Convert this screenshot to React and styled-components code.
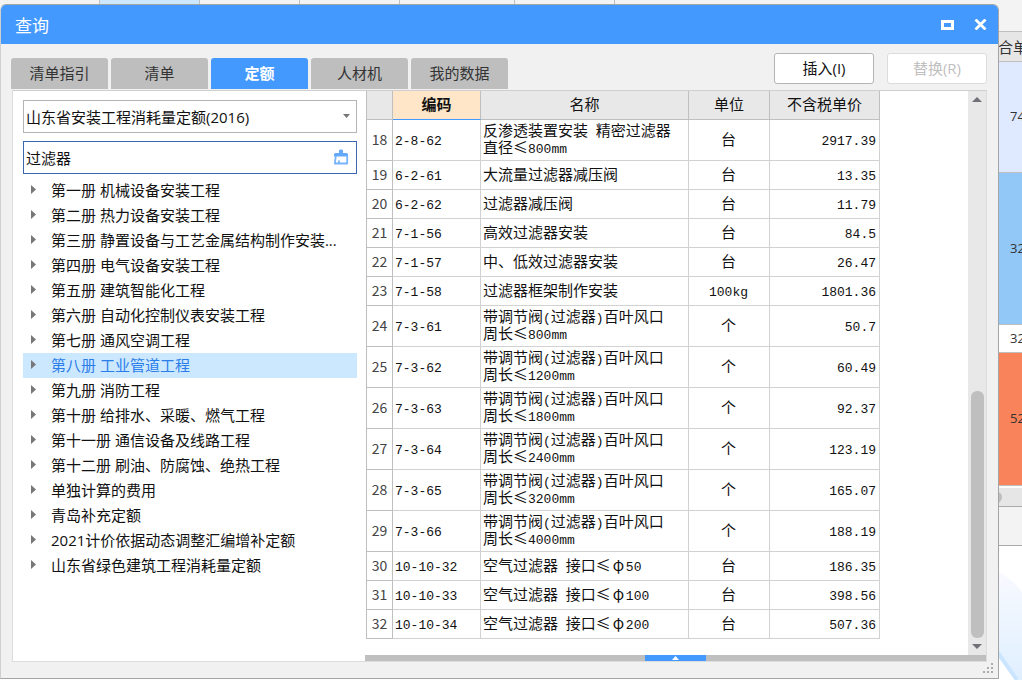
import React, {useState} from 'react'
import styled, {createGlobalStyle, css} from 'styled-components'

const blue = '#4499ff'
const line = '#d2d2d2'
const lineDark = '#bfbfbf'
const surface = '#f1f1f1'
const sans = '"Open Sans", "Noto Sans CJK SC", sans-serif'
const song = '"Noto Sans CJK SC", sans-serif'
const mono = '"Liberation Mono", "Noto Sans CJK SC", monospace'

const GlobalStyle = createGlobalStyle`
  *, *::before, *::after {
    box-sizing: border-box;
  }
  body {
    margin: 0;
    overflow: hidden;
    font-family: ${sans};
    font-size: 15px;
    color: #111;
  }
  button, input, select {
    font: inherit;
    color: inherit;
    margin: 0;
  }
`

/* Main application behind the dialog */

const Backdrop = styled.div`
  position: relative;
  min-height: 100vh;
  display: flex;
  flex-direction: column;
  background: white;
`

const DocTabs = styled.div`
  display: flex;
  height: 32px;
  background: #f3f3f3;
  border-bottom: 1px solid ${lineDark};
`

const DocTab = styled.div`
  width: ${({wide}) => wide ? '115px' : '100px'};
  border-right: 1px solid ${lineDark};
  background: ${({active}) => active ? '#cce8ff' : 'none'};
`

const SheetEdge = styled.div`
  flex: 1;
  width: 24px;
  margin-left: auto;
  display: flex;
  flex-direction: column;
  overflow: hidden;
  white-space: nowrap;
`

const SheetCell = styled.div`
  flex: none;
  display: flex;
  align-items: center;
  height: ${({height}) => height}px;
  padding: ${({head}) => head ? 0 : '0 0 2px 12px'};
  background: ${({color}) => color};
  border-bottom: 1px solid ${lineDark};
  font-size: ${({head}) => head ? '15px' : '13px'};
  color: #333;
`

const SheetScroll = styled.div`
  flex: none;
  height: 19px;
  margin-top: 2px;
  background: #e6e6e6;
  border-bottom: 1px solid #aaa;
`

const SheetFooter = styled.div`
  flex: none;
  height: 39px;
  background: #f3f3f3;
  border-bottom: 1px solid #aaa;
`

const Decoration = styled.svg`
  display: block;
  flex: none;
`

/* Dialog frame */

const Dialog = styled.section`
  position: absolute;
  top: 4px;
  left: 0;
  right: 23px;
  background: ${surface};
  border: 1px solid #a5a5a5;
  border-left-color: #d0d0d0;
  border-radius: 6px 6px 0 0;
  overflow: hidden;
`

const TitleBar = styled.header`
  display: flex;
  align-items: center;
  height: 39px;
  padding: 0 8px 0 14px;
  background: ${blue};
  color: white;
`

const Title = styled.h1`
  flex: 1;
  margin: 0;
  padding-top: 2px;
  font-size: 17px;
  line-height: 24px;
  font-weight: 400;
`

const WindowButton = styled.button`
  display: grid;
  place-items: center;
  width: 20px;
  height: 20px;
  padding: 0;
  margin-left: 13px;
  border: 0;
  background: none;
  cursor: pointer;
`

const Toolbar = styled.div`
  display: flex;
  align-items: flex-end;
  height: 46px;
  padding: 0 11px 0 10px;
`

const Tabs = styled.div`
  flex: 1;
  display: flex;
  gap: 3px;
  padding-bottom: 1px;
`

const Tab = styled.button`
  width: 97px;
  height: 31px;
  padding: 0 0 3px;
  border: 0;
  border-radius: 3px 3px 0 0;
  background: #bebebe;
  color: #333;
  cursor: pointer;
  ${({active}) => active && css`
    background: ${blue};
    color: white;
    font-weight: 700;
  `}
`

const Actions = styled.div`
  display: flex;
  gap: 13px;
  padding-bottom: 6px;
`

const ActionButton = styled.button`
  width: 100px;
  height: 31px;
  padding: 0 0 2px;
  background: white;
  border: 1px solid #b4b4b4;
  border-radius: 3px;
  cursor: pointer;
  &:disabled {
    color: #bfbfbf;
    border-color: #dcdcdc;
    cursor: default;
  }
`

const Body = styled.div`
  display: flex;
  margin: 0 11px 0 11px;
  background: white;
  border: 1px solid #dcdcdc;
  border-top-color: #cfcfcf;
`

const BottomEdge = styled.footer`
  display: flex;
  justify-content: flex-end;
  height: 16px;
  padding: 1px 4px 0 0;
`

/* Left side */

const Sidebar = styled.aside`
  flex: 0 0 352px;
  padding: 9px 8px 0 10px;
`

const Field = styled.div`
  position: relative;
  height: 33px;
  margin-bottom: 8px;
`

const fieldStyle = css`
  display: block;
  width: 100%;
  height: 33px;
  padding: 0 28px 0 2px;
  background: white;
  border-radius: 0;
  outline: 0;
`

const Select = styled.select`
  ${fieldStyle}
  appearance: none;
  border: 1px solid #b4b4b4;
`

const SearchInput = styled.input`
  ${fieldStyle}
  border: 1px solid #3c66ad;
`

const SelectArrow = styled.svg`
  position: absolute;
  right: 7px;
  top: 14px;
  pointer-events: none;
`

const ClearButton = styled.button`
  position: absolute;
  right: 8px;
  top: 8px;
  display: block;
  width: 16px;
  height: 16px;
  padding: 0;
  border: 0;
  background: none;
  cursor: pointer;
`

const Tree = styled.ul`
  margin: 0;
  margin-top: -4px;
  padding: 0;
  list-style: none;
`

const TreeItem = styled.button`
  display: flex;
  align-items: center;
  width: 100%;
  height: 25px;
  padding: 0 8px 2px;
  gap: 15px;
  border: 0;
  background: ${({selected}) => selected ? '#cce8ff' : 'none'};
  color: ${({selected}) => selected ? '#2b7de9' : 'inherit'};
  white-space: nowrap;
  text-align: left;
  cursor: pointer;
`

/* Right side */

const Main = styled.main`
  flex: 1;
  min-width: 0;
  display: flex;
  flex-direction: column;
`

const Scroller = styled.div`
  flex: 1;
  display: flex;
  justify-content: space-between;
`

const TableWrap = styled.div`
  padding: 0 0 16px 1px;
`

const Table = styled.table`
  width: 514px;
  table-layout: fixed;
  border-collapse: separate;
  border-spacing: 0;
  font-family: ${song};
`

const HeadCell = styled.th`
  width: ${({width}) => width}px;
  height: 29px;
  padding: 0 0 3px;
  background: ${({sorted}) => sorted ? '#ffe6c8' : '#e8e8e8'};
  border-right: 1px solid ${lineDark};
  border-bottom: 1px solid ${({sorted}) => sorted ? blue : lineDark};
  font-weight: ${({sorted}) => sorted ? 700 : 400};
  line-height: 17px;
  &:first-child {
    border-left: 1px solid ${lineDark};
  }
`

const Cell = styled.td`
  height: ${({tall}) => tall ? '41px' : '29px'};
  padding: 0 3px 4px 2px;
  border-right: 1px solid ${line};
  border-bottom: 1px solid ${line};
  text-align: ${({align}) => align || 'left'};
  line-height: 17px;
  white-space: pre-line;
`

const RowNumber = styled.th`
  padding: 0 0 1px;
  border: solid ${lineDark};
  border-width: 0 1px 1px;
  font-size: 14px;
  font-weight: 400;
  line-height: 17px;
  color: #444;
`

const Half = styled.span`
  font-family: ${mono};
  font-size: 13px;
  line-height: 0;
  white-space: pre-wrap;
`

const Full = styled.span`
  display: inline-block;
  width: 15px;
  text-align: center;
`

const ScrollBar = styled.div`
  flex: none;
  width: 18px;
  display: flex;
  flex-direction: column;
  align-items: center;
  background: #e8e8e8;
`

const ScrollButton = styled.button`
  display: grid;
  place-items: center;
  width: 100%;
  height: 17px;
  padding: 0;
  border: 0;
  background: none;
`

const ScrollTrack = styled.div`
  flex: 1;
  display: flex;
  flex-direction: column;
  width: 13px;
`

const ScrollSpace = styled.div`
  flex: 282;
`

const ScrollThumb = styled.div`
  flex: 247;
  border-radius: 6px;
  background: #bfbfbf;
`

const Splitter = styled.div`
  display: flex;
  justify-content: center;
  height: 6px;
  background: ${lineDark};
`

const SplitterHandle = styled.button`
  display: grid;
  place-items: center;
  width: 61px;
  height: 6px;
  padding: 0;
  border: 0;
  background: ${blue};
`

const tabs = ['清单指引', '清单', '定额', '人材机', '我的数据']

const books = [
  '第一册 机械设备安装工程',
  '第二册 热力设备安装工程',
  '第三册 静置设备与工艺金属结构制作安装...',
  '第四册 电气设备安装工程',
  '第五册 建筑智能化工程',
  '第六册 自动化控制仪表安装工程',
  '第七册 通风空调工程',
  '第八册 工业管道工程',
  '第九册 消防工程',
  '第十册 给排水、采暖、燃气工程',
  '第十一册 通信设备及线路工程',
  '第十二册 刷油、防腐蚀、绝热工程',
  '单独计算的费用',
  '青岛补充定额',
  '2021计价依据动态调整汇编增补定额',
  '山东省绿色建筑工程消耗量定额'
]

const rows = [
  [18, '2-8-62', '反渗透装置安装 精密过滤器\n直径≤800mm', '台', '2917.39'],
  [19, '6-2-61', '大流量过滤器减压阀', '台', '13.35'],
  [20, '6-2-62', '过滤器减压阀', '台', '11.79'],
  [21, '7-1-56', '高效过滤器安装', '台', '84.5'],
  [22, '7-1-57', '中、低效过滤器安装', '台', '26.47'],
  [23, '7-1-58', '过滤器框架制作安装', '100kg', '1801.36'],
  [24, '7-3-61', '带调节阀(过滤器)百叶风口\n周长≤800mm', '个', '50.7'],
  [25, '7-3-62', '带调节阀(过滤器)百叶风口\n周长≤1200mm', '个', '60.49'],
  [26, '7-3-63', '带调节阀(过滤器)百叶风口\n周长≤1800mm', '个', '92.37'],
  [27, '7-3-64', '带调节阀(过滤器)百叶风口\n周长≤2400mm', '个', '123.19'],
  [28, '7-3-65', '带调节阀(过滤器)百叶风口\n周长≤3200mm', '个', '165.07'],
  [29, '7-3-66', '带调节阀(过滤器)百叶风口\n周长≤4000mm', '个', '188.19'],
  [30, '10-10-32', '空气过滤器 接口≤φ50', '台', '186.35'],
  [31, '10-10-33', '空气过滤器 接口≤φ100', '台', '398.56'],
  [32, '10-10-34', '空气过滤器 接口≤φ200', '台', '507.36']
]

// Latin runs are set half as wide as the Chinese characters around them,
// the diameter sign takes a full cell
const Mixed = ({text}) => text.split(/([\x20-\x7e]+|φ)/).map((part, i) => {
  if (part === 'φ') return <Full key={i}>{part}</Full>
  return i % 2 ? <Half key={i}>{part}</Half> : part
})

const Triangle = ({points, width, height, fill = '#707078'}) =>
  <svg width={width} height={height} viewBox={`0 0 ${width} ${height}`} aria-hidden="true">
    <polygon points={points} fill={fill}/>
  </svg>

const BrushIcon = () =>
  <svg width="16" height="16" viewBox="0 0 16 16" aria-hidden="true">
    <path d="M6 1.5Q6 .5 8 .5T10 1.5V4H13.5Q15 4 15 5.5V7.5H1V5.5Q1 4 2.5 4H6Z" fill="#65a9fb"/>
    <path d="M2.8 7L1.8 14.5H14.2V7M5.5 14.5L6.2 11.5" fill="none" stroke="#78b4fb" strokeWidth="1.8" strokeLinejoin="round"/>
  </svg>

const Grip = () =>
  <svg width="11" height="11" viewBox="0 0 11 11" fill="#ababab" aria-hidden="true">
    <path d="M8 0h2v2h-2zM4 4h2v2h-2zM8 4h2v2h-2zM0 8h2v2h-2zM4 8h2v2h-2zM8 8h2v2h-2z"/>
  </svg>

const Sheet = () =>
  <SheetEdge>
    <SheetCell head height={30} color="#e6e6e6">合单价</SheetCell>
    <SheetCell height={111} color="#dfe9ff">74.2</SheetCell>
    <SheetCell height={152} color="#92c8f8">32.5</SheetCell>
    <SheetCell height={28} color="white">32.5</SheetCell>
    <SheetCell height={133} color="#f9845c">52.1</SheetCell>
    <SheetScroll>
      <svg width="4" height="18" viewBox="0 0 4 18" aria-hidden="true">
        <path d="M0 4Q4 5 4 9T0 15Z" fill="#bfbfbf"/>
      </svg>
    </SheetScroll>
    <SheetFooter/>
    <Decoration width="24" height="134" viewBox="0 0 24 134" aria-hidden="true">
      <defs>
        <linearGradient id="glow" x1="0" y1="0" x2="0" y2="1">
          <stop offset="0" stopColor="#f8faff"/>
          <stop offset="1" stopColor="#dfefff"/>
        </linearGradient>
      </defs>
      <path d="M0 26Q14 32 24 46V134H20L0 106Z" fill="url(#glow)"/>
      <path d="M0 107L19 134" stroke="#cbe5ff" strokeWidth="4"/>
    </Decoration>
  </SheetEdge>

const SearchPanel = ({selected, onSelect}) => {
  const [query, setQuery] = useState('过滤器')
  return (
    <Sidebar>
      <Field>
        <Select aria-label="定额库">
          <option>山东省安装工程消耗量定额(2016)</option>
        </Select>
        <SelectArrow width="7" height="4" viewBox="0 0 7 4" aria-hidden="true">
          <polygon points="0,0 7,0 3.5,4" fill="#777"/>
        </SelectArrow>
      </Field>
      <Field>
        <SearchInput aria-label="搜索" value={query} onChange={e => setQuery(e.target.value)}/>
        <ClearButton aria-label="清除" onClick={() => setQuery('')}><BrushIcon/></ClearButton>
      </Field>
      <Tree>
        {books.map(book =>
          <li key={book}>
            <TreeItem selected={book === selected} onClick={() => onSelect(book)}>
              <Triangle width={5} height={9} points="0,0 5,4.5 0,9" fill="#777"/>
              {book}
            </TreeItem>
          </li>
        )}
      </Tree>
    </Sidebar>
  )
}

const QuotaTable = () =>
  <Table>
    <thead>
      <tr>
        <HeadCell width={27} aria-label="序号"/>
        <HeadCell width={88} sorted>编码</HeadCell>
        <HeadCell width={208}>名称</HeadCell>
        <HeadCell width={81}>单位</HeadCell>
        <HeadCell width={110}>不含税单价</HeadCell>
      </tr>
    </thead>
    <tbody>
      {rows.map(([number, code, name, unit, price]) =>
        <tr key={number}>
          <RowNumber scope="row">{number}</RowNumber>
          <Cell tall={name.includes('\n')}><Mixed text={code}/></Cell>
          <Cell><Mixed text={name}/></Cell>
          <Cell align="center"><Mixed text={unit}/></Cell>
          <Cell align="right"><Mixed text={price}/></Cell>
        </tr>
      )}
    </tbody>
  </Table>

const App = () => {
  const [tab, setTab] = useState('定额')
  const [book, setBook] = useState('第八册 工业管道工程')
  return (
    <Backdrop>
      <GlobalStyle/>
      <DocTabs>
        <DocTab/>
        <DocTab active/>
        <DocTab/>
        <DocTab/>
        <DocTab wide/>
        <DocTab/>
      </DocTabs>
      <Sheet/>
      <Dialog role="dialog" aria-labelledby="dialog-title">
        <TitleBar>
          <Title id="dialog-title">查询</Title>
          <WindowButton aria-label="最大化">
            <svg width="13" height="10" viewBox="0 0 13 10" aria-hidden="true">
              <rect x="1.5" y="1.5" width="10" height="7" fill="none" stroke="white" strokeWidth="3"/>
            </svg>
          </WindowButton>
          <WindowButton aria-label="关闭">
            <svg width="13" height="11" viewBox="0 0 13 11" aria-hidden="true">
              <path d="M1.5 .5L11.5 10.5M11.5 .5L1.5 10.5" stroke="white" strokeWidth="2.8"/>
            </svg>
          </WindowButton>
        </TitleBar>
        <Toolbar>
          <Tabs role="tablist">
            {tabs.map(name =>
              <Tab key={name} role="tab" aria-selected={name === tab} active={name === tab} onClick={() => setTab(name)}>
                {name}
              </Tab>
            )}
          </Tabs>
          <Actions>
            <ActionButton>插入(I)</ActionButton>
            <ActionButton disabled>替换(R)</ActionButton>
          </Actions>
        </Toolbar>
        <Body>
          <SearchPanel selected={book} onSelect={setBook}/>
          <Main>
            <Scroller>
              <TableWrap><QuotaTable/></TableWrap>
              <ScrollBar>
                <ScrollButton aria-label="向上滚动">
                  <Triangle width={10} height={5} points="0,5 5,0 10,5"/>
                </ScrollButton>
                <ScrollTrack>
                  <ScrollSpace/>
                  <ScrollThumb/>
                </ScrollTrack>
                <ScrollButton aria-label="向下滚动">
                  <Triangle width={10} height={5} points="0,0 10,0 5,5"/>
                </ScrollButton>
              </ScrollBar>
            </Scroller>
            <Splitter>
              <SplitterHandle aria-label="展开">
                <Triangle width={7} height={4} points="0,4 3.5,0 7,4" fill="white"/>
              </SplitterHandle>
            </Splitter>
          </Main>
        </Body>
        <BottomEdge><Grip/></BottomEdge>
      </Dialog>
    </Backdrop>
  )
}

export default App
